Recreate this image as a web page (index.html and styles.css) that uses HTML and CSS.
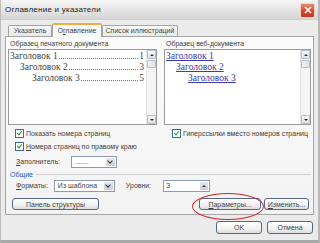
FILE: index.html
```html
<!DOCTYPE html>
<html lang="ru">
<head>
  <meta charset="UTF-8">
  <title>Оглавление и указатели</title>
  <link rel="stylesheet" href="styles.css">
</head>
<body>

  <div class="window">
    <div class="titlebar">
      <span class="title">Оглавление и указатели</span>
      <span class="close">
        <svg width="8" height="8" viewBox="0 0 8 8"><path d="M1 1 L7 7 M7 1 L1 7" stroke="#fff" stroke-width="1.6"/></svg>
      </span>
    </div>

    <div class="client">
      <div class="tabs">
        <div class="tab index">Указатель</div>
        <div class="tab active">О<u>г</u>лавление</div>
        <div class="tab figures">Список иллюстраций</div>
      </div>

      <div class="page">
        <div class="samples">
          <div class="sample">
            <div class="label">Образец печатного документа</div>
            <div class="preview">
              <div class="lines">
                <div class="toc lvl1"><span>Заголовок 1</span><span class="dots"></span><span>1</span></div>
                <div class="toc lvl2"><span>Заголовок 2</span><span class="dots"></span><span>3</span></div>
                <div class="toc lvl3"><span>Заголовок 3</span><span class="dots"></span><span>5</span></div>
              </div>
              <div class="scrollbar">
                <span class="arrow up"></span>
                <span class="thumb"></span>
                <span class="track"></span>
                <span class="arrow down"></span>
              </div>
            </div>
          </div>
          <div class="sample">
            <div class="label">Образец веб-документа</div>
            <div class="preview">
              <div class="lines web">
                <div class="link lvl1">Заголовок 1</div>
                <div class="link lvl2">Заголовок 2</div>
                <div class="link lvl3">Заголовок 3</div>
              </div>
              <div class="scrollbar">
                <span class="arrow up"></span>
                <span class="thumb"></span>
                <span class="track"></span>
                <span class="arrow down"></span>
              </div>
            </div>
          </div>
        </div>

        <div class="options">
          <div class="col">
            <label class="check"><span class="box"></span><span>Показать номера страниц</span></label>
            <label class="check"><span class="box"></span><span><u>Н</u>омера страниц по правому краю</span></label>
            <div class="field">
              <span><u>З</u>аполнитель:</span>
              <span class="combo leader"><span class="value">.......</span><span class="drop"></span></span>
            </div>
          </div>
          <div class="col">
            <label class="check"><span class="box"></span><span>Гиперссылки вместо номеров страниц</span></label>
          </div>
        </div>

        <div class="group-title"><span>Общие</span></div>

        <div class="field general">
          <span><u>Ф</u>орматы:</span>
          <span class="combo formats"><span class="value">Из шаблона</span><span class="drop"></span></span>
          <span class="levels">Уровни:</span>
          <span class="spin"><span class="value">3</span><span class="spin-btn"></span></span>
        </div>

        <div class="page-buttons">
          <button class="btn outline">Панель структуры</button>
          <span class="spacer"></span>
          <button class="btn params"><u>П</u>араметры...</button>
          <button class="btn change"><u>И</u>зменить...</button>
        </div>
      </div>

      <div class="dialog-buttons">
        <button class="btn ok">OK</button>
        <button class="btn cancel">Отмена</button>
      </div>
    </div>

    <div class="circle"></div>
  </div>

</body>
</html>
```

FILE: styles.css
```css
body {
  margin: 0;
  font-family: "Liberation Sans", Arial, sans-serif;
  font-size: 7px;
  color: #404040;
  background: #e9e9e9;
}

.window {
  position: relative;
  width: 320px;
  height: 243px;
  box-sizing: border-box;
  background: #ebebeb;
  border-left: 1px solid #bdbdbd;
  border-right: 2px solid #b8b8b8;
  border-bottom: 3px solid #a9a9a9;
  overflow: hidden;
}

.titlebar {
  height: 19px;
  display: flex;
  align-items: center;
  justify-content: space-between;
  padding: 0 3px 0 4px;
  background: linear-gradient(#f6f6f6, #e2e2e2 60%, #d6d6d6);
  border-bottom: 1px solid #cfcfcf;
}

.title {
  font-size: 8px;
  color: #222;
  letter-spacing: 0.25px;
}

.close {
  width: 13px;
  height: 13px;
  margin-top: 1px;
  display: flex;
  align-items: center;
  justify-content: center;
  border: 1px solid #f4d0c8;
  border-radius: 2px;
  background: linear-gradient(#e98a6f, #d2472a 55%, #c23a20);
}

.client {
  padding: 2px 4px 0 4px;
}

/* tabs */
.tabs {
  display: flex;
  align-items: flex-end;
  height: 14px;
  padding-left: 3px;
}

.tab {
  height: 10px;
  line-height: 10px;
  text-align: center;
  border: 1px solid #a4a4a4;
  border-bottom: none;
  border-radius: 2px 2px 0 0;
  background: linear-gradient(#fafafa, #e8e8e8);
  color: #444;
}

.tab.index {
  width: 42px;
}

.tab.active {
  width: 48px;
  height: 12px;
  line-height: 12px;
  border-top: 2px solid #f0b040;
  background: #f9f9f9;
  margin-bottom: -1px;
  position: relative;
}

.tab.figures {
  width: 74px;
}

.page {
  height: 179px;
  box-sizing: border-box;
  border: 1px solid #a6a6a6;
  background: linear-gradient(#fbfbfb, #f3f3f3);
  padding: 2px 2px 0 2px;
}

.samples {
  display: flex;
  gap: 7px;
}

.sample {
  display: flex;
  flex-direction: column;
}

.sample:first-child {
  width: 150px;
}

.sample:last-child {
  width: 148px;
}

.label {
  padding-left: 2px;
  height: 10px;
  line-height: 10px;
}

.preview {
  height: 74px;
  display: flex;
  background: #fff;
  border: 1px solid #9a9a9a;
}

.lines {
  flex: 1;
  overflow: hidden;
  padding: 1px 2px 0 1px;
  font-family: "Liberation Serif", "Times New Roman", serif;
  font-size: 9.5px;
  color: #444;
}

.toc {
  display: flex;
  height: 11px;
  line-height: 11px;
  white-space: nowrap;
}

.toc .dots {
  flex: 1;
  margin: 0 1px 3px 1px;
  border-bottom: 1px dotted #777;
}

.lvl2 {
  padding-left: 10px;
}

.lvl3 {
  padding-left: 22px;
}

.web {
  color: #3a3aa8;
}

.link {
  height: 11px;
  line-height: 11px;
  text-decoration: underline;
}

.scrollbar {
  width: 9px;
  display: flex;
  flex-direction: column;
  background: #f4f4f4;
  border-left: 1px solid #e4e4e4;
}

.arrow {
  height: 9px;
  box-sizing: border-box;
  border: 1px solid #b8c0cc;
  border-radius: 1px;
  background: linear-gradient(#f8f8fb, #dfe2e9);
  display: flex;
  align-items: center;
  justify-content: center;
}

.arrow::before {
  content: "";
  width: 0;
  height: 0;
  border-left: 2px solid transparent;
  border-right: 2px solid transparent;
}

.arrow.up::before {
  border-bottom: 2px solid #333;
}

.arrow.down::before {
  border-top: 2px solid #333;
}

.thumb {
  height: 8px;
  margin-top: 1px;
  box-sizing: border-box;
  border: 1px solid #b8c0cc;
  border-radius: 1px;
  background: linear-gradient(90deg, #eef0f5, #dde1e8);
}

.track {
  flex: 1;
}

/* option checkboxes */
.options {
  display: flex;
  gap: 7px;
  margin-top: 4px;
}

.options .col:first-child {
  width: 150px;
}

.options .col {
  display: flex;
  flex-direction: column;
  gap: 4px;
}

.check {
  display: flex;
  align-items: center;
  gap: 2px;
  padding-left: 7px;
  height: 9px;
  white-space: nowrap;
}

.box {
  width: 7px;
  height: 7px;
  border: 1px solid #3f6a95;
  background: #fff;
  position: relative;
}

.box::after {
  content: "";
  position: absolute;
  left: 2px;
  top: 0;
  width: 2px;
  height: 4px;
  border: solid #2c9a2c;
  border-width: 0 1.5px 1.5px 0;
  transform: rotate(40deg);
}

.field {
  display: flex;
  align-items: center;
  padding-left: 8px;
  height: 13px;
}

.combo {
  height: 12px;
  box-sizing: border-box;
  display: flex;
  border: 1px solid #8b9bb5;
  background: #fff;
}

.combo .value {
  flex: 1;
  padding-left: 3px;
  line-height: 10px;
}

.drop {
  width: 9px;
  margin: 1px;
  background: linear-gradient(#e6e9ef, #c7ccd6);
  border-radius: 1px;
  display: flex;
  align-items: center;
  justify-content: center;
}

.drop::before {
  content: "";
  width: 3px;
  height: 3px;
  margin-top: -2px;
  border: solid #333;
  border-width: 0 1.5px 1.5px 0;
  transform: rotate(45deg);
}

.leader {
  width: 46px;
  margin-left: 11px;
}

.group-title {
  display: flex;
  align-items: center;
  gap: 3px;
  height: 9px;
  margin-top: 2px;
  padding-left: 2px;
  color: #2a56c6;
}

.group-title::after {
  content: "";
  flex: 1;
  height: 1px;
  background: #cfcfcf;
}

.formats {
  width: 61px;
  margin-left: 6px;
}

.levels {
  margin-left: 11px;
}

.spin {
  width: 47px;
  height: 12px;
  box-sizing: border-box;
  margin-left: 12px;
  display: flex;
  border: 1px solid #8b9bb5;
  background: #fff;
}

.spin .value {
  flex: 1;
  padding-left: 2px;
  line-height: 10px;
}

.spin-btn {
  width: 8px;
  margin: 1px;
  background: linear-gradient(#e6e9ef, #c7ccd6);
  display: flex;
  align-items: center;
  justify-content: center;
}

.spin-btn::before {
  content: "";
  width: 0;
  height: 0;
  border-left: 2px solid transparent;
  border-right: 2px solid transparent;
  border-bottom: 2px solid #333;
}

.page-buttons {
  display: flex;
  align-items: center;
  margin-top: 6px;
  padding: 0 2px 0 4px;
}

.spacer {
  flex: 1;
}

.btn {
  height: 12px;
  padding: 0;
  font-family: "Liberation Sans", Arial, sans-serif;
  font-size: 7px;
  color: #444;
  border: 1px solid #55678a;
  border-radius: 3px;
  background: linear-gradient(#ffffff, #f1f1f1 60%, #dcdcdc);
}

.outline {
  width: 87px;
}

.params {
  width: 62px;
}

.change {
  width: 45px;
  margin-left: 3px;
}

.dialog-buttons {
  display: flex;
  justify-content: flex-end;
  gap: 5px;
  margin-top: 6px;
  padding-right: 1px;
}

.ok,
.cancel {
  width: 46px;
  height: 13px;
}

.circle {
  position: absolute;
  left: 191px;
  top: 193px;
  width: 70px;
  height: 25px;
  border: 1.5px solid #d62828;
  border-radius: 50%;
}
```
